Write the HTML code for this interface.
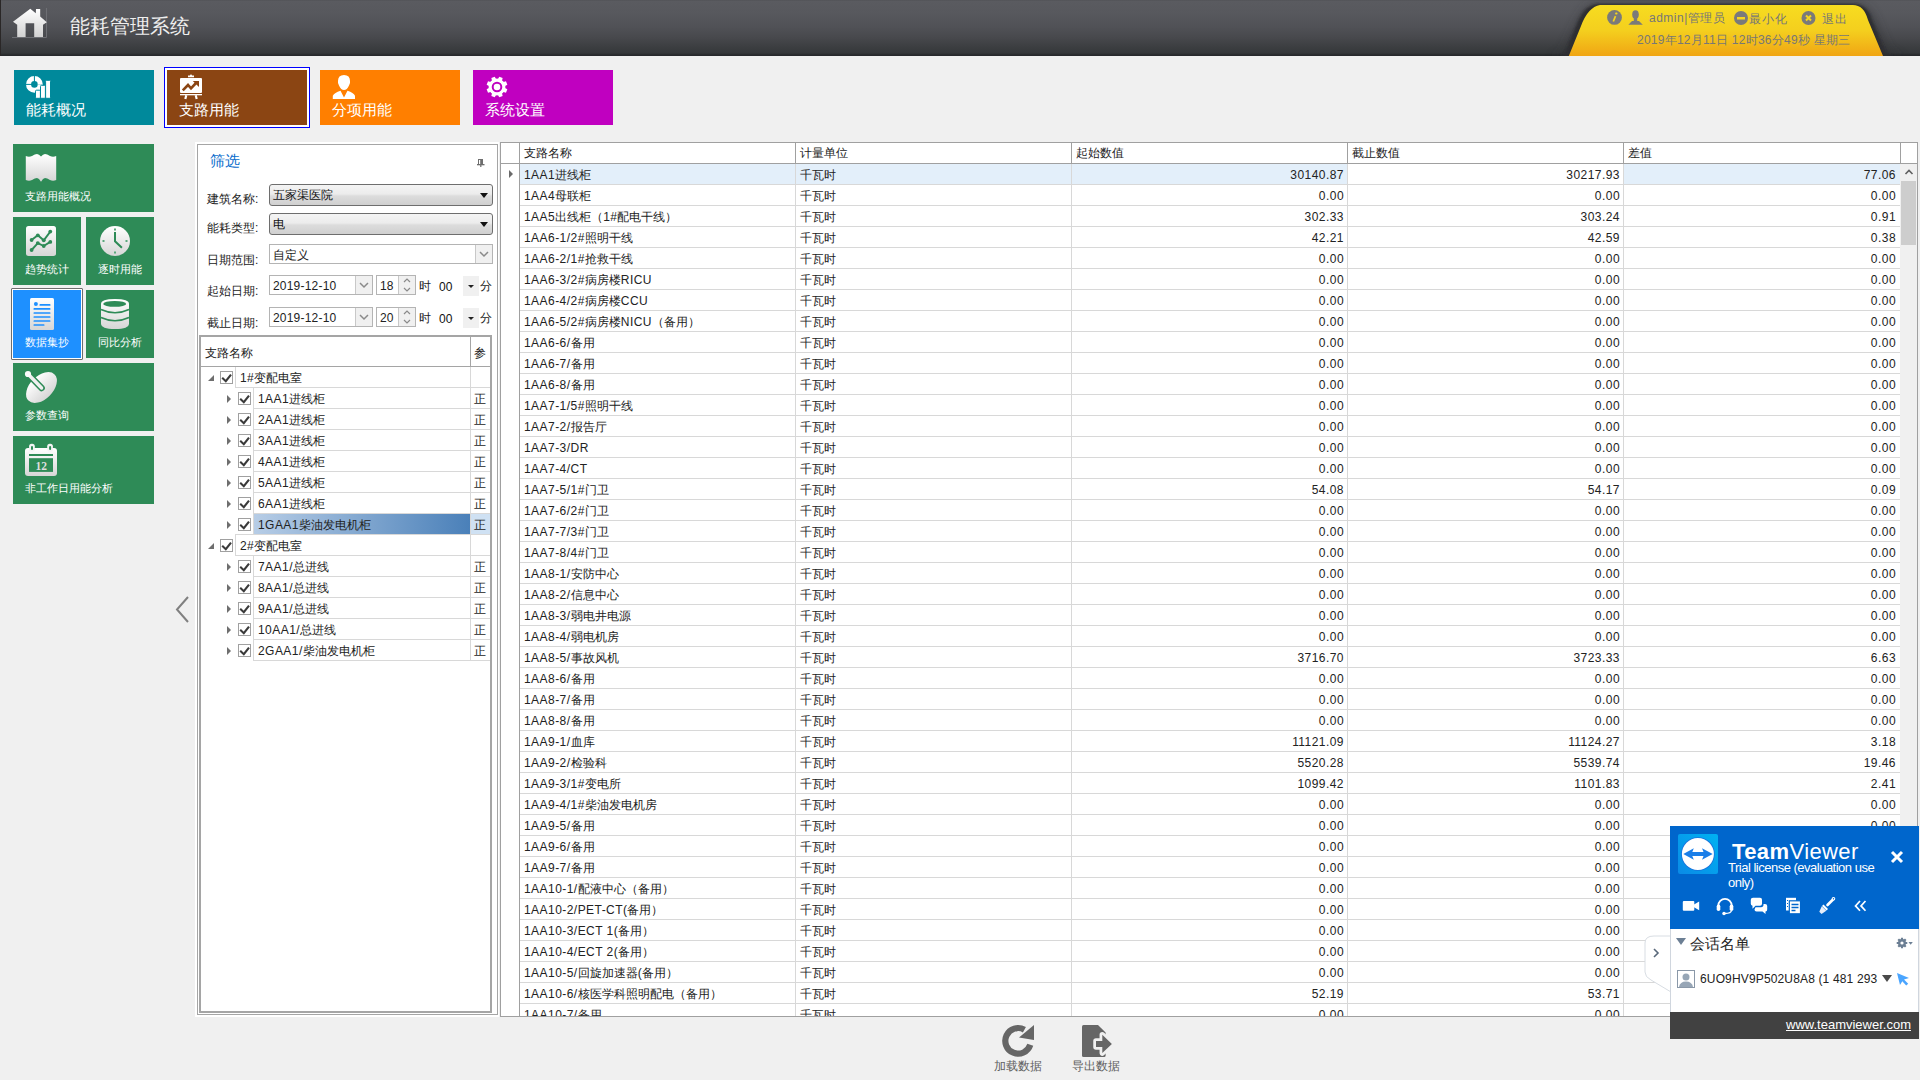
<!DOCTYPE html>
<html><head><meta charset="utf-8"><title>能耗管理系统</title>
<style>
*{box-sizing:border-box}
html,body{margin:0;padding:0}
body{width:1920px;height:1080px;position:relative;overflow:hidden;background:#f0f0f0;font-family:"Liberation Sans",sans-serif;font-size:12px;color:#222}
.abs{position:absolute}
/* header */
.hdr{position:absolute;left:0;top:0;width:1920px;height:56px;background:linear-gradient(#4f5054 0px,#5a5b60 1px,#57585d 14px,#515257 26px,#48494d 37px,#3d3f42 46px,#35383a 53px,#2b2d2f 54.5px,#25272a 56px)}
.title{position:absolute;left:70px;top:12px;font-size:20px;color:#eeeeee;line-height:26px;letter-spacing:0px}
/* top tiles */
.tile{position:absolute;top:70px;width:140px;height:55px;color:#fff}
.tile .lbl{position:absolute;left:12px;top:31px;font-size:15px;line-height:18px}
.tile svg{position:absolute}
/* side tiles */
.st{position:absolute;background:#2e8b57;color:#fff}
.st .lbl{position:absolute;left:12px;top:45px;font-size:11px;line-height:14px;white-space:nowrap}
.st svg{position:absolute}
/* filter */
.fp{position:absolute;left:195px;top:142px;width:304px;height:875px;background:#fff}
.fpb{position:absolute;left:197px;top:144px;width:301px;height:871px;border:1px solid #a5a5a5}
.flbl{position:absolute;left:207px;font-size:12px;line-height:14px;color:#222}
.combo{position:absolute;left:269px;width:224px;height:22px;border:1px solid #6e6e6e;border-radius:3px;background:linear-gradient(#f4f4f4 0%,#ececec 45%,#dcdcdc 55%,#d0d0d0 100%)}
.combo .v{position:absolute;left:3px;top:3px;font-size:12px;line-height:14px;color:#111}
.combo .dd{position:absolute;right:4px;top:8px;width:0;height:0;border-left:4px solid transparent;border-right:4px solid transparent;border-top:5px solid #111}
.tbox{position:absolute;background:#fff;border:1px solid #b4b4b4}
.tbox .v{position:absolute;left:3px;top:3px;font-size:12px;line-height:14px;color:#222;letter-spacing:0.2px}
.ddb{position:absolute;top:0;bottom:0;background:#f0f0f0;border-left:1px solid #c8c8c8}
/* grid */
.grid{position:absolute;left:0;top:0}
.gframe{position:absolute;left:500px;top:142px;width:1418px;height:875px;border:1px solid #a0a0a0;background:#fff}
.gh{position:absolute;top:146px;font-size:12px;line-height:14px;color:#222;white-space:nowrap}
.ghb{position:absolute;left:501px;top:163px;width:1416px;height:1px;background:#a0a0a0}
.hl{position:absolute;height:20px;background:#e3effa}
.rl{position:absolute;left:520px;width:1380px;height:1px;background:#d8d8d8}
.gt{position:absolute;margin-top:1px;font-size:12px;line-height:20px;color:#222;white-space:nowrap}
.gt.r{text-align:right;letter-spacing:0.45px}
.cl{position:absolute;top:164px;width:1px;height:852px;background:#d8d8d8}
.chl{position:absolute;top:143px;width:1px;height:21px;background:#a0a0a0}
.rarrow{position:absolute;left:509px;top:170px;width:0;height:0;border-top:4px solid transparent;border-bottom:4px solid transparent;border-left:4px solid #6a6a6a}
.sb{position:absolute;left:1900px;top:164px;width:17px;height:852px;background:#f0f0f0}
.sbthumb{position:absolute;left:1901px;top:181px;width:15px;height:64px;background:#cdcdcd}
.sbup{position:absolute;left:1901px;top:164px;width:16px;height:17px}
/* tree */
.treeb{position:absolute;left:199px;top:335px;width:293px;height:678px;border:2px solid #a5a5a5;background:#fff}
.th{position:absolute;top:346px;font-size:12px;line-height:14px;color:#222}
.thb{position:absolute;left:201px;top:366px;width:289px;height:1px;background:#a5a5a5}
.tcl{position:absolute;left:470px;top:337px;width:1px;height:29px;background:#a5a5a5}
.tvl2{position:absolute;left:470px;width:1px;height:21px;background:#d8d8d8}
.tri0{position:absolute;left:208px;width:0;height:0;border-left:6px solid transparent;border-bottom:6px solid #6e6e6e}
.tri1{position:absolute;left:227px;width:0;height:0;border-top:4px solid transparent;border-bottom:4px solid transparent;border-left:4px solid #6e6e6e}
.cb{position:absolute;width:13px;height:13px;border:1px solid #a0a0a0;background:#fff}
.cb svg{position:absolute;left:-1px;top:-1px}
.tvl{position:absolute;width:1px;height:21px;background:#d8d8d8}
.thl{position:absolute;height:1px;background:#d8d8d8}
.tt{position:absolute;margin-top:1px;font-size:12px;line-height:20px;color:#222;white-space:nowrap}
.tsel{position:absolute;left:254px;width:216px;height:20px;background:linear-gradient(90deg,#b7cde6,#4a80b9)}
.tsel2{position:absolute;left:471px;width:19px;height:20px;background:#cfe1f3}
/* bottom */
.bbtn{position:absolute;font-size:12px;line-height:14px;color:#606060}
/* teamviewer */
.tv{position:absolute;left:1670px;top:826px;width:249px;height:213px;background:#fff}
.tvh{position:absolute;left:0;top:0;width:249px;height:103px;background:#0066cc}
.tvf{position:absolute;left:0;top:186px;width:249px;height:27px;background:#414141}

.lt{letter-spacing:0.45px}

</style></head>
<body>
<!-- header -->
<div class="hdr"></div>
<div class="abs" style="left:0;top:0;width:1px;height:56px;background:#2a2727"></div>
<svg class="abs" style="left:0;top:0" width="60" height="56">
 <defs><linearGradient id="hg" x1="0" y1="0" x2="0" y2="1"><stop offset="0" stop-color="#ffffff"/><stop offset="1" stop-color="#d2d2d2"/></linearGradient></defs>
 <path d="M46.5 8 L46.5 37.5 L12 37.5" fill="none" stroke="#6e6f74" stroke-width="1"/>
 <path d="M30.3 8.7 L35.8 13.2 L36 9 L40.2 9 L40.2 16.5 L46.8 22.3 L43 24.8 L43 37 L34.2 37 L34.2 23.3 L25.6 23.3 L25.6 37 L17.2 37 L17.2 24.8 L13 21.8 Z" fill="url(#hg)"/>
</svg>
<div class="title" style="top:13px">能耗管理系统</div>

<!-- yellow tab -->
<svg class="abs" style="left:1540px;top:0" width="380" height="56">
 <defs>
  <linearGradient id="yg" x1="0" y1="0" x2="0" y2="1"><stop offset="0" stop-color="#f7dc20"/><stop offset="0.5" stop-color="#f4cf1e"/><stop offset="1" stop-color="#f0a514"/></linearGradient>
  <filter id="blur1" x="-20%" y="-20%" width="140%" height="140%"><feGaussianBlur stdDeviation="1.2"/></filter>
  <filter id="blur2" x="-20%" y="-20%" width="140%" height="140%"><feGaussianBlur stdDeviation="4"/></filter>
 </defs>
 <path d="M8 56 Q20 56 24 48 L36 22 Q44 3 60 3 L312 3 Q330 3 336 20 L348 48 Q353 56 368 56 Z" fill="#303135" opacity="0.5" filter="url(#blur2)"/>
 <path d="M18 56 Q24 56 26 50 L37 24 Q44 4 60 4 L313 4 Q328 4 332 20 L345 50 Q348 56 356 56 Z" fill="#2e2f33" filter="url(#blur1)"/>
 <path d="M28.8 56 L41 26 Q48 7 60 5 L312.8 5 Q324 5 328 20 L343 56 Z" fill="url(#yg)"/>
</svg>
<svg class="abs" style="left:1606px;top:9px" width="18" height="18"><circle cx="8.5" cy="8.4" r="7.4" fill="#7a7a7a"/><path d="M10 4.5 L10.6 4.5" stroke="#f5d520" stroke-width="1.8" stroke-linecap="round"/><path d="M9.5 7.2 L7.3 12.5" stroke="#f5d520" stroke-width="1.7"/></svg>
<svg class="abs" style="left:1626px;top:8px" width="18" height="18"><ellipse cx="9.5" cy="6.5" rx="3.3" ry="4.3" fill="#7a7a7a"/><rect x="7.8" y="9" width="3.4" height="4.5" fill="#7a7a7a"/><path d="M2.4 16.75 L6 13 L13 13 L16.8 16.75 Z" fill="#7a7a7a"/></svg>
<div class="abs" style="left:1649px;top:10px;font-size:12px;line-height:16px;color:#777;white-space:nowrap;letter-spacing:0.5px">admin|管理员</div>
<svg class="abs" style="left:1734px;top:11px" width="15" height="15"><circle cx="7" cy="7" r="7" fill="#7a7a7a"/><rect x="3" y="6" width="8" height="2.5" fill="#f5d520"/></svg>
<div class="abs" style="left:1749px;top:11px;font-size:12px;line-height:16px;color:#777;white-space:nowrap;letter-spacing:1px">最小化</div>
<svg class="abs" style="left:1801px;top:11px" width="15" height="15"><circle cx="7.5" cy="7" r="7" fill="#7a7a7a"/><path d="M5 4.5 L10 9.5 M10 4.5 L5 9.5" stroke="#f5d520" stroke-width="2"/></svg>
<div class="abs" style="left:1822px;top:11px;font-size:12px;line-height:16px;color:#777;white-space:nowrap;letter-spacing:1px">退出</div>
<div class="abs" style="left:1637px;top:32px;font-size:12px;line-height:16px;color:#777;white-space:nowrap;letter-spacing:0.25px">2019年12月11日 12时36分49秒 星期三</div>

<!-- top tiles -->
<div class="tile" style="left:14px;background:#00899b">
 <svg style="left:6px;top:0px" width="40" height="30"><path d="M14.4 6 A8.4 8.4 0 1 0 22.8 14.4 L17.7 14.4 A3.3 3.3 0 1 1 14.4 11.1 Z" fill="#fff"/><path d="M14.4 6 A8.4 8.4 0 0 1 22.8 14.4 L17.7 14.4 A3.3 3.3 0 0 0 14.4 11.1 Z" fill="#fff"/><rect x="13.9" y="5" width="1" height="7" fill="#00899b"/><rect x="5" y="13.9" width="7" height="1" fill="#00899b"/><g fill="#fff" stroke="#00899b" stroke-width="1"><rect x="15.5" y="20.2" width="4.9" height="8.1" rx="1"/><rect x="20.5" y="15.3" width="4.9" height="13" rx="1"/><rect x="25.6" y="10.3" width="4.9" height="18" rx="1"/></g></svg>
 <div class="lbl">能耗概况</div>
</div>
<div class="abs" style="left:164px;top:67px;width:146px;height:61px;border:1px solid #0000ff;background:#fff"></div>
<div class="tile" style="left:167px;background:#8b4513">
 <svg style="left:8px;top:0px" width="34" height="32"><path d="M13 7.2 L13 5.6 L15 5.6 L15.5 4.6 L16.5 4.6 L17 5.6 L19 5.6 L19 7.2 Z" fill="#fff"/><rect x="5" y="7.9" width="22" height="15.1" rx="1" fill="#fff"/><rect x="5" y="24" width="22" height="1.3" fill="#fff"/><path d="M11.3 25.2 L10.3 29 M20.7 25.2 L21.7 29" stroke="#fff" stroke-width="2.2"/><path d="M7.8 20.3 L13 15 L16 18.3 L21.5 12.5" stroke="#8b4513" stroke-width="2.6" fill="none"/><path d="M17.8 11 L24 11 L24 17 Z" fill="#8b4513"/></svg>
 <div class="lbl">支路用能</div>
</div>
<div class="tile" style="left:320px;background:#ff7f00">
 <svg style="left:6px;top:0px" width="36" height="32"><path d="M18 4.9 Q24 4.9 24 11 Q24.5 13.5 23 15.5 Q21 20 18 20 Q15 20 13 15.5 Q11.5 13.5 12 11 Q12 4.9 18 4.9 Z" fill="#fff"/><path d="M6.8 28.9 L6.8 25.8 Q8.5 22.5 14.5 20.7 L18 27.5 L21.5 20.7 Q27.5 22.5 29 25.8 L29 28.9 Z" fill="#fff"/></svg>
 <div class="lbl">分项用能</div>
</div>
<div class="tile" style="left:473px;background:#c000c0">
 <svg style="left:7px;top:0px" width="34" height="34"><path d="M18.00 8.86 L19.34 6.66 L22.65 8.03 L22.05 10.54 L23.46 11.95 L25.97 11.35 L27.34 14.66 L25.14 16.00 L25.14 18.00 L27.34 19.34 L25.97 22.65 L23.46 22.05 L22.05 23.46 L22.65 25.97 L19.34 27.34 L18.00 25.14 L16.00 25.14 L14.66 27.34 L11.35 25.97 L11.95 23.46 L10.54 22.05 L8.03 22.65 L6.66 19.34 L8.86 18.00 L8.86 16.00 L6.66 14.66 L8.03 11.35 L10.54 11.95 L11.95 10.54 L11.35 8.03 L14.66 6.66 L16.00 8.86 Z" fill="#fff"/><circle cx="17" cy="17" r="8.3" fill="#fff"/><circle cx="17" cy="17" r="4.3" fill="none" stroke="#c000c0" stroke-width="2"/></svg>
 <div class="lbl">系统设置</div>
</div>

<!-- side tiles -->
<svg width="0" height="0" style="position:absolute"><defs><linearGradient id="wg" x1="0" y1="0" x2="0" y2="1"><stop offset="0" stop-color="#ffffff"/><stop offset="1" stop-color="#d6d6d6"/></linearGradient></defs></svg>
<div class="st" style="left:13px;top:144px;width:141px;height:68px">
 <svg style="left:7px;top:4px" width="42" height="36"><path d="M5.8 8 Q9 9.5 12 8 Q15 6 17 6 Q19 6 21 8.5 Q23 6 25 6 Q27 6 30 8 Q33 9.5 36.2 8 L36.2 32 Q33 33.5 30 32 Q27 30 25 30 Q23 30 21 33.7 Q19 30 17 30 Q15 30 12 32 Q9 33.5 5.8 32 Z" fill="url(#wg)"/></svg>
 <div class="lbl">支路用能概况</div>
</div>
<div class="st" style="left:13px;top:217px;width:68px;height:68px">
 <svg style="left:13px;top:9px" width="32" height="32"><rect x="0" y="0" width="30" height="30" rx="2.5" fill="url(#wg)"/><path d="M5.6 14 L11.8 9.3 L17.75 14.3 L24.3 5.6 M5.6 24 L11.8 17.1 L17.75 20 L24.3 15.9" stroke="#2e8b57" stroke-width="1.9" fill="none"/><g fill="#2e8b57"><circle cx="5.6" cy="14" r="1.9"/><circle cx="11.8" cy="9.3" r="1.9"/><circle cx="17.75" cy="14.3" r="1.9"/><circle cx="24.3" cy="5.6" r="1.9"/><circle cx="5.6" cy="24" r="1.9"/><circle cx="11.8" cy="17.1" r="1.9"/><circle cx="17.75" cy="20" r="1.9"/><circle cx="24.3" cy="15.9" r="1.9"/></g></svg>
 <div class="lbl">趋势统计</div>
</div>
<div class="st" style="left:86px;top:217px;width:68px;height:68px">
 <svg style="left:14px;top:9px" width="32" height="32"><circle cx="15" cy="15" r="15" fill="url(#wg)"/><path d="M15 6 L15 15.2 L21.9 21.8" stroke="#2e8b57" stroke-width="2" fill="none"/><g fill="#5aa87c"><rect x="14" y="2.5" width="2" height="2"/><rect x="14" y="25.5" width="2" height="2"/><rect x="2.5" y="14" width="2" height="2"/><rect x="25.5" y="14" width="2" height="2"/></g></svg>
 <div class="lbl" style="left:12px">逐时用能</div>
</div>
<div class="abs" style="left:11px;top:288px;width:72px;height:72px;border:1px solid #6e6e6e;background:#fff;border-radius:1px"></div>
<div class="st" style="left:13px;top:290px;width:68px;height:68px;background:#1e90ff">
 <svg style="left:17px;top:8px" width="26" height="34"><rect x="0" y="0" width="24" height="32" rx="1.5" fill="url(#wg)"/><circle cx="5.9" cy="5.9" r="2" fill="#1e90ff"/><g stroke="#1e90ff" stroke-width="1.7" stroke-linecap="round"><path d="M10.3 6.9 L19.7 6.9 M4.3 10.9 L19.7 10.9 M4.3 15 L19.7 15 M4.3 19 L19.7 19 M4.3 23 L19.7 23 M4.3 27 L13.7 27"/></g></svg>
 <div class="lbl">数据集抄</div>
</div>
<div class="st" style="left:86px;top:290px;width:68px;height:68px">
 <svg style="left:14px;top:8px" width="32" height="34"><path d="M1 6 Q1 1 15 1 Q29 1 29 6 L29 25.5 Q29 31 15 31 Q1 31 1 25.5 Z" fill="url(#wg)"/><ellipse cx="14.7" cy="5.9" rx="11.5" ry="2.9" fill="#2e8b57"/><path d="M1 11.5 Q15 18 29 11.5 M1 19.5 Q15 26 29 19.5" stroke="#2e8b57" stroke-width="1.7" fill="none"/></svg>
 <div class="lbl" style="left:12px">同比分析</div>
</div>
<div class="st" style="left:13px;top:363px;width:141px;height:68px">
 <svg style="left:7px;top:2px" width="44" height="44"><ellipse cx="21.5" cy="22.5" rx="18.5" ry="11.5" transform="rotate(-45 21.5 22.5)" fill="url(#wg)"/><path d="M8 9 L21.6 23" stroke="#2e8b57" stroke-width="6.5" stroke-linecap="round"/><path d="M8 9 L21.6 23" stroke="#f0f0f0" stroke-width="3.4" stroke-linecap="round"/><circle cx="8" cy="9" r="3.1" fill="#fafafa"/></svg>
 <div class="lbl">参数查询</div>
</div>
<div class="st" style="left:13px;top:436px;width:141px;height:68px">
 <svg style="left:7px;top:2px" width="44" height="44"><rect x="5" y="10" width="32" height="28" rx="3" fill="url(#wg)"/><rect x="9" y="16" width="24" height="2" fill="#2e8b57"/><rect x="9" y="20.2" width="24" height="13.7" fill="#2e8b57"/><rect x="9.1" y="5.8" width="5.7" height="8" rx="2.5" fill="#f4f4f4"/><rect x="11" y="8" width="2" height="4" rx="1" fill="#2e8b57"/><rect x="27.2" y="5.8" width="5.7" height="8" rx="2.5" fill="#f4f4f4"/><rect x="29.1" y="8" width="2" height="4" rx="1" fill="#2e8b57"/><text x="21.2" y="32.2" text-anchor="middle" font-family="Liberation Serif" font-weight="bold" font-size="11.5" fill="#dedede">12</text></svg>
 <div class="lbl">非工作日用能分析</div>
</div>

<!-- collapse arrow -->
<svg class="abs" style="left:170px;top:592px" width="24" height="36"><path d="M188 597 L177 609.5 L188 622" transform="translate(-170,-592)" stroke="#808080" stroke-width="2" fill="none"/></svg>

<!-- filter panel -->
<div class="fp"></div>
<div class="fpb"></div>
<div class="abs" style="left:210px;top:152px;font-size:15px;line-height:18px;color:#0a6ccc">筛选</div>
<svg class="abs" style="left:476px;top:158px" width="10" height="10"><rect x="2" y="1" width="5" height="5.5" fill="#6e6e6e"/><rect x="3" y="2" width="1.2" height="4" fill="#fff"/><rect x="1" y="6" width="7.5" height="1.3" fill="#6e6e6e"/><rect x="4.2" y="7" width="1.2" height="2" fill="#6e6e6e"/></svg>
<div class="flbl" style="top:192px">建筑名称:</div>
<div class="flbl" style="top:221px">能耗类型:</div>
<div class="flbl" style="top:253px">日期范围:</div>
<div class="flbl" style="top:284px">起始日期:</div>
<div class="flbl" style="top:316px">截止日期:</div>
<div class="combo" style="top:184px"><div class="v">五家渠医院</div><div class="dd"></div></div>
<div class="combo" style="top:213px"><div class="v">电</div><div class="dd"></div></div>
<div class="tbox" style="left:269px;top:244px;width:224px;height:20px"><div class="v">自定义</div><div class="ddb" style="right:0;width:17px"><svg width="16" height="18"><path d="M4 7 L8 11 L12 7" stroke="#8a8a8a" stroke-width="1.5" fill="none"/></svg></div></div>
<div class="tbox" style="left:269px;top:275px;width:104px;height:20px"><div class="v">2019-12-10</div><div class="ddb" style="right:0;width:17px"><svg width="16" height="18"><path d="M4 7 L8 11 L12 7" stroke="#8a8a8a" stroke-width="1.5" fill="none"/></svg></div></div>
<div class="tbox" style="left:376px;top:275px;width:40px;height:20px"><div class="v">18</div><div class="ddb" style="right:0;width:17px"><svg width="16" height="18"><path d="M5 6 L8 3 L11 6 M5 12 L8 15 L11 12" stroke="#8a8a8a" stroke-width="1.2" fill="none"/></svg></div></div>
<div class="abs" style="left:419px;top:278px;font-size:12px;line-height:16px">时</div>
<div class="abs" style="left:439px;top:279px;font-size:12px;line-height:16px;color:#111">00</div>
<div class="abs" style="left:463px;top:276px;width:16px;height:20px;background:#f0f0f0"><div style="position:absolute;left:5px;top:9px;border-left:3px solid transparent;border-right:3px solid transparent;border-top:3px solid #222"></div></div>
<div class="abs" style="left:480px;top:278px;font-size:12px;line-height:16px">分</div>
<div class="tbox" style="left:269px;top:307px;width:104px;height:20px"><div class="v">2019-12-10</div><div class="ddb" style="right:0;width:17px"><svg width="16" height="18"><path d="M4 7 L8 11 L12 7" stroke="#8a8a8a" stroke-width="1.5" fill="none"/></svg></div></div>
<div class="tbox" style="left:376px;top:307px;width:40px;height:20px"><div class="v">20</div><div class="ddb" style="right:0;width:17px"><svg width="16" height="18"><path d="M5 6 L8 3 L11 6 M5 12 L8 15 L11 12" stroke="#8a8a8a" stroke-width="1.2" fill="none"/></svg></div></div>
<div class="abs" style="left:419px;top:310px;font-size:12px;line-height:16px">时</div>
<div class="abs" style="left:439px;top:311px;font-size:12px;line-height:16px;color:#111">00</div>
<div class="abs" style="left:463px;top:308px;width:16px;height:20px;background:#f0f0f0"><div style="position:absolute;left:5px;top:9px;border-left:3px solid transparent;border-right:3px solid transparent;border-top:3px solid #222"></div></div>
<div class="abs" style="left:480px;top:310px;font-size:12px;line-height:16px">分</div>
<div class="treeb"></div>
<div class="gframe"></div>

<div class="grid" style="width:1920px;height:1016px;overflow:hidden">
<div class="gh" style="left:524px">支路名称</div>
<div class="gh" style="left:800px">计量单位</div>
<div class="gh" style="left:1076px">起始数值</div>
<div class="gh" style="left:1352px">截止数值</div>
<div class="gh" style="left:1628px">差值</div>
<div class="hl" style="top:164px;left:520px;width:827px"></div>
<div class="hl" style="top:164px;left:1624px;width:276px"></div>
<div class="rarrow"></div>
<div class="rl" style="top:184px"></div>
<div class="gt" style="top:164px;left:524px"><span class="lt">1AA1</span>进线柜</div>
<div class="gt" style="top:164px;left:800px">千瓦时</div>
<div class="gt r" style="top:164px;left:1072px;width:272px">30140.87</div>
<div class="gt r" style="top:164px;left:1348px;width:272px">30217.93</div>
<div class="gt r" style="top:164px;left:1624px;width:272px">77.06</div>
<div class="rl" style="top:205px"></div>
<div class="gt" style="top:185px;left:524px"><span class="lt">1AA4</span>母联柜</div>
<div class="gt" style="top:185px;left:800px">千瓦时</div>
<div class="gt r" style="top:185px;left:1072px;width:272px">0.00</div>
<div class="gt r" style="top:185px;left:1348px;width:272px">0.00</div>
<div class="gt r" style="top:185px;left:1624px;width:272px">0.00</div>
<div class="rl" style="top:226px"></div>
<div class="gt" style="top:206px;left:524px"><span class="lt">1AA5</span>出线柜（<span class="lt">1#</span>配电干线）</div>
<div class="gt" style="top:206px;left:800px">千瓦时</div>
<div class="gt r" style="top:206px;left:1072px;width:272px">302.33</div>
<div class="gt r" style="top:206px;left:1348px;width:272px">303.24</div>
<div class="gt r" style="top:206px;left:1624px;width:272px">0.91</div>
<div class="rl" style="top:247px"></div>
<div class="gt" style="top:227px;left:524px"><span class="lt">1AA6-1/2#</span>照明干线</div>
<div class="gt" style="top:227px;left:800px">千瓦时</div>
<div class="gt r" style="top:227px;left:1072px;width:272px">42.21</div>
<div class="gt r" style="top:227px;left:1348px;width:272px">42.59</div>
<div class="gt r" style="top:227px;left:1624px;width:272px">0.38</div>
<div class="rl" style="top:268px"></div>
<div class="gt" style="top:248px;left:524px"><span class="lt">1AA6-2/1#</span>抢救干线</div>
<div class="gt" style="top:248px;left:800px">千瓦时</div>
<div class="gt r" style="top:248px;left:1072px;width:272px">0.00</div>
<div class="gt r" style="top:248px;left:1348px;width:272px">0.00</div>
<div class="gt r" style="top:248px;left:1624px;width:272px">0.00</div>
<div class="rl" style="top:289px"></div>
<div class="gt" style="top:269px;left:524px"><span class="lt">1AA6-3/2#</span>病房楼<span class="lt">RICU</span></div>
<div class="gt" style="top:269px;left:800px">千瓦时</div>
<div class="gt r" style="top:269px;left:1072px;width:272px">0.00</div>
<div class="gt r" style="top:269px;left:1348px;width:272px">0.00</div>
<div class="gt r" style="top:269px;left:1624px;width:272px">0.00</div>
<div class="rl" style="top:310px"></div>
<div class="gt" style="top:290px;left:524px"><span class="lt">1AA6-4/2#</span>病房楼<span class="lt">CCU</span></div>
<div class="gt" style="top:290px;left:800px">千瓦时</div>
<div class="gt r" style="top:290px;left:1072px;width:272px">0.00</div>
<div class="gt r" style="top:290px;left:1348px;width:272px">0.00</div>
<div class="gt r" style="top:290px;left:1624px;width:272px">0.00</div>
<div class="rl" style="top:331px"></div>
<div class="gt" style="top:311px;left:524px"><span class="lt">1AA6-5/2#</span>病房楼<span class="lt">NICU</span>（备用）</div>
<div class="gt" style="top:311px;left:800px">千瓦时</div>
<div class="gt r" style="top:311px;left:1072px;width:272px">0.00</div>
<div class="gt r" style="top:311px;left:1348px;width:272px">0.00</div>
<div class="gt r" style="top:311px;left:1624px;width:272px">0.00</div>
<div class="rl" style="top:352px"></div>
<div class="gt" style="top:332px;left:524px"><span class="lt">1AA6-6/</span>备用</div>
<div class="gt" style="top:332px;left:800px">千瓦时</div>
<div class="gt r" style="top:332px;left:1072px;width:272px">0.00</div>
<div class="gt r" style="top:332px;left:1348px;width:272px">0.00</div>
<div class="gt r" style="top:332px;left:1624px;width:272px">0.00</div>
<div class="rl" style="top:373px"></div>
<div class="gt" style="top:353px;left:524px"><span class="lt">1AA6-7/</span>备用</div>
<div class="gt" style="top:353px;left:800px">千瓦时</div>
<div class="gt r" style="top:353px;left:1072px;width:272px">0.00</div>
<div class="gt r" style="top:353px;left:1348px;width:272px">0.00</div>
<div class="gt r" style="top:353px;left:1624px;width:272px">0.00</div>
<div class="rl" style="top:394px"></div>
<div class="gt" style="top:374px;left:524px"><span class="lt">1AA6-8/</span>备用</div>
<div class="gt" style="top:374px;left:800px">千瓦时</div>
<div class="gt r" style="top:374px;left:1072px;width:272px">0.00</div>
<div class="gt r" style="top:374px;left:1348px;width:272px">0.00</div>
<div class="gt r" style="top:374px;left:1624px;width:272px">0.00</div>
<div class="rl" style="top:415px"></div>
<div class="gt" style="top:395px;left:524px"><span class="lt">1AA7-1/5#</span>照明干线</div>
<div class="gt" style="top:395px;left:800px">千瓦时</div>
<div class="gt r" style="top:395px;left:1072px;width:272px">0.00</div>
<div class="gt r" style="top:395px;left:1348px;width:272px">0.00</div>
<div class="gt r" style="top:395px;left:1624px;width:272px">0.00</div>
<div class="rl" style="top:436px"></div>
<div class="gt" style="top:416px;left:524px"><span class="lt">1AA7-2/</span>报告厅</div>
<div class="gt" style="top:416px;left:800px">千瓦时</div>
<div class="gt r" style="top:416px;left:1072px;width:272px">0.00</div>
<div class="gt r" style="top:416px;left:1348px;width:272px">0.00</div>
<div class="gt r" style="top:416px;left:1624px;width:272px">0.00</div>
<div class="rl" style="top:457px"></div>
<div class="gt" style="top:437px;left:524px"><span class="lt">1AA7-3/DR</span></div>
<div class="gt" style="top:437px;left:800px">千瓦时</div>
<div class="gt r" style="top:437px;left:1072px;width:272px">0.00</div>
<div class="gt r" style="top:437px;left:1348px;width:272px">0.00</div>
<div class="gt r" style="top:437px;left:1624px;width:272px">0.00</div>
<div class="rl" style="top:478px"></div>
<div class="gt" style="top:458px;left:524px"><span class="lt">1AA7-4/CT</span></div>
<div class="gt" style="top:458px;left:800px">千瓦时</div>
<div class="gt r" style="top:458px;left:1072px;width:272px">0.00</div>
<div class="gt r" style="top:458px;left:1348px;width:272px">0.00</div>
<div class="gt r" style="top:458px;left:1624px;width:272px">0.00</div>
<div class="rl" style="top:499px"></div>
<div class="gt" style="top:479px;left:524px"><span class="lt">1AA7-5/1#</span>门卫</div>
<div class="gt" style="top:479px;left:800px">千瓦时</div>
<div class="gt r" style="top:479px;left:1072px;width:272px">54.08</div>
<div class="gt r" style="top:479px;left:1348px;width:272px">54.17</div>
<div class="gt r" style="top:479px;left:1624px;width:272px">0.09</div>
<div class="rl" style="top:520px"></div>
<div class="gt" style="top:500px;left:524px"><span class="lt">1AA7-6/2#</span>门卫</div>
<div class="gt" style="top:500px;left:800px">千瓦时</div>
<div class="gt r" style="top:500px;left:1072px;width:272px">0.00</div>
<div class="gt r" style="top:500px;left:1348px;width:272px">0.00</div>
<div class="gt r" style="top:500px;left:1624px;width:272px">0.00</div>
<div class="rl" style="top:541px"></div>
<div class="gt" style="top:521px;left:524px"><span class="lt">1AA7-7/3#</span>门卫</div>
<div class="gt" style="top:521px;left:800px">千瓦时</div>
<div class="gt r" style="top:521px;left:1072px;width:272px">0.00</div>
<div class="gt r" style="top:521px;left:1348px;width:272px">0.00</div>
<div class="gt r" style="top:521px;left:1624px;width:272px">0.00</div>
<div class="rl" style="top:562px"></div>
<div class="gt" style="top:542px;left:524px"><span class="lt">1AA7-8/4#</span>门卫</div>
<div class="gt" style="top:542px;left:800px">千瓦时</div>
<div class="gt r" style="top:542px;left:1072px;width:272px">0.00</div>
<div class="gt r" style="top:542px;left:1348px;width:272px">0.00</div>
<div class="gt r" style="top:542px;left:1624px;width:272px">0.00</div>
<div class="rl" style="top:583px"></div>
<div class="gt" style="top:563px;left:524px"><span class="lt">1AA8-1/</span>安防中心</div>
<div class="gt" style="top:563px;left:800px">千瓦时</div>
<div class="gt r" style="top:563px;left:1072px;width:272px">0.00</div>
<div class="gt r" style="top:563px;left:1348px;width:272px">0.00</div>
<div class="gt r" style="top:563px;left:1624px;width:272px">0.00</div>
<div class="rl" style="top:604px"></div>
<div class="gt" style="top:584px;left:524px"><span class="lt">1AA8-2/</span>信息中心</div>
<div class="gt" style="top:584px;left:800px">千瓦时</div>
<div class="gt r" style="top:584px;left:1072px;width:272px">0.00</div>
<div class="gt r" style="top:584px;left:1348px;width:272px">0.00</div>
<div class="gt r" style="top:584px;left:1624px;width:272px">0.00</div>
<div class="rl" style="top:625px"></div>
<div class="gt" style="top:605px;left:524px"><span class="lt">1AA8-3/</span>弱电井电源</div>
<div class="gt" style="top:605px;left:800px">千瓦时</div>
<div class="gt r" style="top:605px;left:1072px;width:272px">0.00</div>
<div class="gt r" style="top:605px;left:1348px;width:272px">0.00</div>
<div class="gt r" style="top:605px;left:1624px;width:272px">0.00</div>
<div class="rl" style="top:646px"></div>
<div class="gt" style="top:626px;left:524px"><span class="lt">1AA8-4/</span>弱电机房</div>
<div class="gt" style="top:626px;left:800px">千瓦时</div>
<div class="gt r" style="top:626px;left:1072px;width:272px">0.00</div>
<div class="gt r" style="top:626px;left:1348px;width:272px">0.00</div>
<div class="gt r" style="top:626px;left:1624px;width:272px">0.00</div>
<div class="rl" style="top:667px"></div>
<div class="gt" style="top:647px;left:524px"><span class="lt">1AA8-5/</span>事故风机</div>
<div class="gt" style="top:647px;left:800px">千瓦时</div>
<div class="gt r" style="top:647px;left:1072px;width:272px">3716.70</div>
<div class="gt r" style="top:647px;left:1348px;width:272px">3723.33</div>
<div class="gt r" style="top:647px;left:1624px;width:272px">6.63</div>
<div class="rl" style="top:688px"></div>
<div class="gt" style="top:668px;left:524px"><span class="lt">1AA8-6/</span>备用</div>
<div class="gt" style="top:668px;left:800px">千瓦时</div>
<div class="gt r" style="top:668px;left:1072px;width:272px">0.00</div>
<div class="gt r" style="top:668px;left:1348px;width:272px">0.00</div>
<div class="gt r" style="top:668px;left:1624px;width:272px">0.00</div>
<div class="rl" style="top:709px"></div>
<div class="gt" style="top:689px;left:524px"><span class="lt">1AA8-7/</span>备用</div>
<div class="gt" style="top:689px;left:800px">千瓦时</div>
<div class="gt r" style="top:689px;left:1072px;width:272px">0.00</div>
<div class="gt r" style="top:689px;left:1348px;width:272px">0.00</div>
<div class="gt r" style="top:689px;left:1624px;width:272px">0.00</div>
<div class="rl" style="top:730px"></div>
<div class="gt" style="top:710px;left:524px"><span class="lt">1AA8-8/</span>备用</div>
<div class="gt" style="top:710px;left:800px">千瓦时</div>
<div class="gt r" style="top:710px;left:1072px;width:272px">0.00</div>
<div class="gt r" style="top:710px;left:1348px;width:272px">0.00</div>
<div class="gt r" style="top:710px;left:1624px;width:272px">0.00</div>
<div class="rl" style="top:751px"></div>
<div class="gt" style="top:731px;left:524px"><span class="lt">1AA9-1/</span>血库</div>
<div class="gt" style="top:731px;left:800px">千瓦时</div>
<div class="gt r" style="top:731px;left:1072px;width:272px">11121.09</div>
<div class="gt r" style="top:731px;left:1348px;width:272px">11124.27</div>
<div class="gt r" style="top:731px;left:1624px;width:272px">3.18</div>
<div class="rl" style="top:772px"></div>
<div class="gt" style="top:752px;left:524px"><span class="lt">1AA9-2/</span>检验科</div>
<div class="gt" style="top:752px;left:800px">千瓦时</div>
<div class="gt r" style="top:752px;left:1072px;width:272px">5520.28</div>
<div class="gt r" style="top:752px;left:1348px;width:272px">5539.74</div>
<div class="gt r" style="top:752px;left:1624px;width:272px">19.46</div>
<div class="rl" style="top:793px"></div>
<div class="gt" style="top:773px;left:524px"><span class="lt">1AA9-3/1#</span>变电所</div>
<div class="gt" style="top:773px;left:800px">千瓦时</div>
<div class="gt r" style="top:773px;left:1072px;width:272px">1099.42</div>
<div class="gt r" style="top:773px;left:1348px;width:272px">1101.83</div>
<div class="gt r" style="top:773px;left:1624px;width:272px">2.41</div>
<div class="rl" style="top:814px"></div>
<div class="gt" style="top:794px;left:524px"><span class="lt">1AA9-4/1#</span>柴油发电机房</div>
<div class="gt" style="top:794px;left:800px">千瓦时</div>
<div class="gt r" style="top:794px;left:1072px;width:272px">0.00</div>
<div class="gt r" style="top:794px;left:1348px;width:272px">0.00</div>
<div class="gt r" style="top:794px;left:1624px;width:272px">0.00</div>
<div class="rl" style="top:835px"></div>
<div class="gt" style="top:815px;left:524px"><span class="lt">1AA9-5/</span>备用</div>
<div class="gt" style="top:815px;left:800px">千瓦时</div>
<div class="gt r" style="top:815px;left:1072px;width:272px">0.00</div>
<div class="gt r" style="top:815px;left:1348px;width:272px">0.00</div>
<div class="gt r" style="top:815px;left:1624px;width:272px">0.00</div>
<div class="rl" style="top:856px"></div>
<div class="gt" style="top:836px;left:524px"><span class="lt">1AA9-6/</span>备用</div>
<div class="gt" style="top:836px;left:800px">千瓦时</div>
<div class="gt r" style="top:836px;left:1072px;width:272px">0.00</div>
<div class="gt r" style="top:836px;left:1348px;width:272px">0.00</div>
<div class="gt r" style="top:836px;left:1624px;width:272px">0.00</div>
<div class="rl" style="top:877px"></div>
<div class="gt" style="top:857px;left:524px"><span class="lt">1AA9-7/</span>备用</div>
<div class="gt" style="top:857px;left:800px">千瓦时</div>
<div class="gt r" style="top:857px;left:1072px;width:272px">0.00</div>
<div class="gt r" style="top:857px;left:1348px;width:272px">0.00</div>
<div class="gt r" style="top:857px;left:1624px;width:272px">0.00</div>
<div class="rl" style="top:898px"></div>
<div class="gt" style="top:878px;left:524px"><span class="lt">1AA10-1/</span>配液中心（备用）</div>
<div class="gt" style="top:878px;left:800px">千瓦时</div>
<div class="gt r" style="top:878px;left:1072px;width:272px">0.00</div>
<div class="gt r" style="top:878px;left:1348px;width:272px">0.00</div>
<div class="gt r" style="top:878px;left:1624px;width:272px">0.00</div>
<div class="rl" style="top:919px"></div>
<div class="gt" style="top:899px;left:524px"><span class="lt">1AA10-2/PET-CT(</span>备用）</div>
<div class="gt" style="top:899px;left:800px">千瓦时</div>
<div class="gt r" style="top:899px;left:1072px;width:272px">0.00</div>
<div class="gt r" style="top:899px;left:1348px;width:272px">0.00</div>
<div class="gt r" style="top:899px;left:1624px;width:272px">0.00</div>
<div class="rl" style="top:940px"></div>
<div class="gt" style="top:920px;left:524px"><span class="lt">1AA10-3/ECT 1(</span>备用）</div>
<div class="gt" style="top:920px;left:800px">千瓦时</div>
<div class="gt r" style="top:920px;left:1072px;width:272px">0.00</div>
<div class="gt r" style="top:920px;left:1348px;width:272px">0.00</div>
<div class="gt r" style="top:920px;left:1624px;width:272px">0.00</div>
<div class="rl" style="top:961px"></div>
<div class="gt" style="top:941px;left:524px"><span class="lt">1AA10-4/ECT 2(</span>备用）</div>
<div class="gt" style="top:941px;left:800px">千瓦时</div>
<div class="gt r" style="top:941px;left:1072px;width:272px">0.00</div>
<div class="gt r" style="top:941px;left:1348px;width:272px">0.00</div>
<div class="gt r" style="top:941px;left:1624px;width:272px">0.00</div>
<div class="rl" style="top:982px"></div>
<div class="gt" style="top:962px;left:524px"><span class="lt">1AA10-5/</span>回旋加速器<span class="lt">(</span>备用）</div>
<div class="gt" style="top:962px;left:800px">千瓦时</div>
<div class="gt r" style="top:962px;left:1072px;width:272px">0.00</div>
<div class="gt r" style="top:962px;left:1348px;width:272px">0.00</div>
<div class="gt r" style="top:962px;left:1624px;width:272px">0.00</div>
<div class="rl" style="top:1003px"></div>
<div class="gt" style="top:983px;left:524px"><span class="lt">1AA10-6/</span>核医学科照明配电（备用）</div>
<div class="gt" style="top:983px;left:800px">千瓦时</div>
<div class="gt r" style="top:983px;left:1072px;width:272px">52.19</div>
<div class="gt r" style="top:983px;left:1348px;width:272px">53.71</div>
<div class="gt r" style="top:983px;left:1624px;width:272px">1.52</div>
<div class="rl" style="top:1024px"></div>
<div class="gt" style="top:1004px;left:524px"><span class="lt">1AA10-7/</span>备用</div>
<div class="gt" style="top:1004px;left:800px">千瓦时</div>
<div class="gt r" style="top:1004px;left:1072px;width:272px">0.00</div>
<div class="gt r" style="top:1004px;left:1348px;width:272px">0.00</div>
<div class="gt r" style="top:1004px;left:1624px;width:272px">0.00</div>
<div class="cl" style="left:519px;background:#a0a0a0"></div>
<div class="chl" style="left:519px"></div>
<div class="cl" style="left:795px"></div>
<div class="chl" style="left:795px"></div>
<div class="cl" style="left:1071px"></div>
<div class="chl" style="left:1071px"></div>
<div class="cl" style="left:1347px"></div>
<div class="chl" style="left:1347px"></div>
<div class="cl" style="left:1623px"></div>
<div class="chl" style="left:1623px"></div>
<div class="chl" style="left:1900px"></div>
<div class="ghb"></div>
<div class="sb"></div><div class="sbthumb"></div><div class="sbup"><svg width="16" height="17"><path d="M4.5 10 L8 6.5 L11.5 10" stroke="#606060" stroke-width="1.6" fill="none"/></svg></div>
</div>
<div class="tree">
<div class="th" style="left:205px">支路名称</div><div class="th" style="left:474px">参</div>
<div class="thb"></div><div class="tcl"></div>
<div class="tri0" style="top:375px"></div>
<div class="cb" style="left:220px;top:371px"><svg width="13" height="13"><path d="M2.2 6.8 L5.8 10.2 L11 3.6" stroke="#3a3a3a" stroke-width="2.1" fill="none"/></svg></div>
<div class="tvl" style="left:235px;top:367px"></div>
<div class="thl" style="left:235px;top:387px;width:255px"></div>
<div class="tt" style="left:240px;top:367px"><span class="lt">1#</span>变配电室</div>
<div class="tvl2" style="top:367px"></div>
<div class="tri1" style="top:395px"></div>
<div class="cb" style="left:238px;top:392px"><svg width="13" height="13"><path d="M2.2 6.8 L5.8 10.2 L11 3.6" stroke="#3a3a3a" stroke-width="2.1" fill="none"/></svg></div>
<div class="tvl" style="left:253px;top:388px"></div>
<div class="thl" style="left:253px;top:408px;width:237px"></div>
<div class="tt" style="left:258px;top:388px"><span class="lt">1AA1</span>进线柜</div>
<div class="tt" style="left:474px;top:388px">正</div>
<div class="tvl2" style="top:388px"></div>
<div class="tri1" style="top:416px"></div>
<div class="cb" style="left:238px;top:413px"><svg width="13" height="13"><path d="M2.2 6.8 L5.8 10.2 L11 3.6" stroke="#3a3a3a" stroke-width="2.1" fill="none"/></svg></div>
<div class="tvl" style="left:253px;top:409px"></div>
<div class="thl" style="left:253px;top:429px;width:237px"></div>
<div class="tt" style="left:258px;top:409px"><span class="lt">2AA1</span>进线柜</div>
<div class="tt" style="left:474px;top:409px">正</div>
<div class="tvl2" style="top:409px"></div>
<div class="tri1" style="top:437px"></div>
<div class="cb" style="left:238px;top:434px"><svg width="13" height="13"><path d="M2.2 6.8 L5.8 10.2 L11 3.6" stroke="#3a3a3a" stroke-width="2.1" fill="none"/></svg></div>
<div class="tvl" style="left:253px;top:430px"></div>
<div class="thl" style="left:253px;top:450px;width:237px"></div>
<div class="tt" style="left:258px;top:430px"><span class="lt">3AA1</span>进线柜</div>
<div class="tt" style="left:474px;top:430px">正</div>
<div class="tvl2" style="top:430px"></div>
<div class="tri1" style="top:458px"></div>
<div class="cb" style="left:238px;top:455px"><svg width="13" height="13"><path d="M2.2 6.8 L5.8 10.2 L11 3.6" stroke="#3a3a3a" stroke-width="2.1" fill="none"/></svg></div>
<div class="tvl" style="left:253px;top:451px"></div>
<div class="thl" style="left:253px;top:471px;width:237px"></div>
<div class="tt" style="left:258px;top:451px"><span class="lt">4AA1</span>进线柜</div>
<div class="tt" style="left:474px;top:451px">正</div>
<div class="tvl2" style="top:451px"></div>
<div class="tri1" style="top:479px"></div>
<div class="cb" style="left:238px;top:476px"><svg width="13" height="13"><path d="M2.2 6.8 L5.8 10.2 L11 3.6" stroke="#3a3a3a" stroke-width="2.1" fill="none"/></svg></div>
<div class="tvl" style="left:253px;top:472px"></div>
<div class="thl" style="left:253px;top:492px;width:237px"></div>
<div class="tt" style="left:258px;top:472px"><span class="lt">5AA1</span>进线柜</div>
<div class="tt" style="left:474px;top:472px">正</div>
<div class="tvl2" style="top:472px"></div>
<div class="tri1" style="top:500px"></div>
<div class="cb" style="left:238px;top:497px"><svg width="13" height="13"><path d="M2.2 6.8 L5.8 10.2 L11 3.6" stroke="#3a3a3a" stroke-width="2.1" fill="none"/></svg></div>
<div class="tvl" style="left:253px;top:493px"></div>
<div class="thl" style="left:253px;top:513px;width:237px"></div>
<div class="tt" style="left:258px;top:493px"><span class="lt">6AA1</span>进线柜</div>
<div class="tt" style="left:474px;top:493px">正</div>
<div class="tvl2" style="top:493px"></div>
<div class="tri1" style="top:521px"></div>
<div class="cb" style="left:238px;top:518px"><svg width="13" height="13"><path d="M2.2 6.8 L5.8 10.2 L11 3.6" stroke="#3a3a3a" stroke-width="2.1" fill="none"/></svg></div>
<div class="tsel" style="top:514px"></div><div class="tsel2" style="top:514px"></div>
<div class="tvl" style="left:253px;top:514px"></div>
<div class="thl" style="left:253px;top:534px;width:237px"></div>
<div class="tt" style="left:258px;top:514px"><span class="lt">1GAA1</span>柴油发电机柜</div>
<div class="tt" style="left:474px;top:514px">正</div>
<div class="tvl2" style="top:514px"></div>
<div class="tri0" style="top:543px"></div>
<div class="cb" style="left:220px;top:539px"><svg width="13" height="13"><path d="M2.2 6.8 L5.8 10.2 L11 3.6" stroke="#3a3a3a" stroke-width="2.1" fill="none"/></svg></div>
<div class="tvl" style="left:235px;top:535px"></div>
<div class="thl" style="left:235px;top:555px;width:255px"></div>
<div class="thl" style="left:235px;top:534px;width:255px"></div>
<div class="tt" style="left:240px;top:535px"><span class="lt">2#</span>变配电室</div>
<div class="tvl2" style="top:535px"></div>
<div class="tri1" style="top:563px"></div>
<div class="cb" style="left:238px;top:560px"><svg width="13" height="13"><path d="M2.2 6.8 L5.8 10.2 L11 3.6" stroke="#3a3a3a" stroke-width="2.1" fill="none"/></svg></div>
<div class="tvl" style="left:253px;top:556px"></div>
<div class="thl" style="left:253px;top:576px;width:237px"></div>
<div class="tt" style="left:258px;top:556px"><span class="lt">7AA1/</span>总进线</div>
<div class="tt" style="left:474px;top:556px">正</div>
<div class="tvl2" style="top:556px"></div>
<div class="tri1" style="top:584px"></div>
<div class="cb" style="left:238px;top:581px"><svg width="13" height="13"><path d="M2.2 6.8 L5.8 10.2 L11 3.6" stroke="#3a3a3a" stroke-width="2.1" fill="none"/></svg></div>
<div class="tvl" style="left:253px;top:577px"></div>
<div class="thl" style="left:253px;top:597px;width:237px"></div>
<div class="tt" style="left:258px;top:577px"><span class="lt">8AA1/</span>总进线</div>
<div class="tt" style="left:474px;top:577px">正</div>
<div class="tvl2" style="top:577px"></div>
<div class="tri1" style="top:605px"></div>
<div class="cb" style="left:238px;top:602px"><svg width="13" height="13"><path d="M2.2 6.8 L5.8 10.2 L11 3.6" stroke="#3a3a3a" stroke-width="2.1" fill="none"/></svg></div>
<div class="tvl" style="left:253px;top:598px"></div>
<div class="thl" style="left:253px;top:618px;width:237px"></div>
<div class="tt" style="left:258px;top:598px"><span class="lt">9AA1/</span>总进线</div>
<div class="tt" style="left:474px;top:598px">正</div>
<div class="tvl2" style="top:598px"></div>
<div class="tri1" style="top:626px"></div>
<div class="cb" style="left:238px;top:623px"><svg width="13" height="13"><path d="M2.2 6.8 L5.8 10.2 L11 3.6" stroke="#3a3a3a" stroke-width="2.1" fill="none"/></svg></div>
<div class="tvl" style="left:253px;top:619px"></div>
<div class="thl" style="left:253px;top:639px;width:237px"></div>
<div class="tt" style="left:258px;top:619px"><span class="lt">10AA1/</span>总进线</div>
<div class="tt" style="left:474px;top:619px">正</div>
<div class="tvl2" style="top:619px"></div>
<div class="tri1" style="top:647px"></div>
<div class="cb" style="left:238px;top:644px"><svg width="13" height="13"><path d="M2.2 6.8 L5.8 10.2 L11 3.6" stroke="#3a3a3a" stroke-width="2.1" fill="none"/></svg></div>
<div class="tvl" style="left:253px;top:640px"></div>
<div class="thl" style="left:253px;top:660px;width:237px"></div>
<div class="tt" style="left:258px;top:640px"><span class="lt">2GAA1/</span>柴油发电机柜</div>
<div class="tt" style="left:474px;top:640px">正</div>
<div class="tvl2" style="top:640px"></div>
</div>

<!-- bottom buttons -->
<svg class="abs" style="left:1000px;top:1024px" width="40" height="36"><path d="M30.3 20.8 A12.8 12.8 0 1 1 24.4 5.7" stroke="#666" stroke-width="6.2" fill="none"/><path d="M34 1 L34 16 L19 13.5 Z" fill="#666"/></svg>
<div class="bbtn" style="left:994px;top:1059px">加载数据</div>
<svg class="abs" style="left:1080px;top:1024px" width="36" height="36"><path d="M3.5 1 L18 1 L25.6 8.6 L25.6 31.5 Q25.6 33 24 33 L3.5 33 Q2 33 2 31.5 L2 2.5 Q2 1 3.5 1 Z" fill="#666"/><path d="M16 17 L22.3 17 L22.3 10.8 L31.9 19.9 L22.3 29 L22.3 22.9 L16 22.9 Z" fill="#f0f0f0" stroke="#f0f0f0" stroke-width="5.5" stroke-linejoin="round"/><path d="M16 17 L22.3 17 L22.3 10.8 L31.9 19.9 L22.3 29 L22.3 22.9 L16 22.9 Z" fill="#666"/></svg>
<div class="bbtn" style="left:1072px;top:1059px">导出数据</div>

<!-- side tab -->
<svg class="abs" style="left:1642px;top:935px" width="30" height="58"><path d="M29 1 L12 1 Q3 1 3 8 L3 37 Q3 42 9 45 L29 57" fill="#fff" stroke="#d8dde3" stroke-width="1"/><path d="M12 14 L16 18 L12 22" stroke="#59687a" stroke-width="1.6" fill="none"/></svg>
<!-- teamviewer -->
<div class="tv">
 <div class="tvh"></div>
 <svg class="abs" style="left:8px;top:8px" width="40" height="40"><defs><linearGradient id="tvg" x1="1" y1="0" x2="0" y2="1"><stop offset="0" stop-color="#00b2f2"/><stop offset="1" stop-color="#0a8ae6"/></linearGradient></defs><rect x="0" y="0" width="40" height="40" rx="2" fill="url(#tvg)"/><circle cx="19.9" cy="20" r="16.8" fill="#1a72dc"/><circle cx="19.9" cy="20" r="16" fill="#fff"/><path d="M5.3 20 L15.8 14.2 L14.3 18 L25.5 18 L24 14.2 L34.7 20 L24 25.8 L25.5 22 L14.3 22 L15.8 25.8 Z" fill="#1a7ee8"/></svg>
 <div class="abs" style="left:62px;top:12px;font-size:22px;line-height:28px;color:#fff;white-space:nowrap;letter-spacing:0.4px"><b>Team</b>Viewer</div>
 <div class="abs" style="left:58px;top:34px;font-size:13px;line-height:15px;color:#fff;white-space:nowrap;letter-spacing:-0.5px">Trial license (evaluation use<br>only)</div>
 <svg class="abs" style="left:220px;top:24px" width="14" height="14"><path d="M2 2 L12 12 M12 2 L2 12" stroke="#fff" stroke-width="3"/></svg>
 <svg class="abs" style="left:0;top:66px" width="249" height="30">
  <g fill="#fff">
   <rect x="12.8" y="9" width="11.5" height="9.8" rx="1"/><path d="M24 12.5 L29.2 9.5 L29.2 18.3 L24 15.3 Z"/>
  </g>
  <path d="M48.3 15 L48.3 13.5 A6.7 6.7 0 0 1 61.7 13.5 L61.7 15" stroke="#fff" stroke-width="1.8" fill="none"/>
  <rect x="46.7" y="12.5" width="3.6" height="6.5" rx="1.8" fill="#fff"/><rect x="59.7" y="12.5" width="3.6" height="6.5" rx="1.8" fill="#fff"/>
  <path d="M61.5 18.5 Q61 21.5 55 21.5" stroke="#fff" stroke-width="1.4" fill="none"/><circle cx="54" cy="21.5" r="1.7" fill="#fff"/>
  <path d="M83 5.8 L90 5.8 Q92 5.8 92 7.8 L92 11.8 Q92 13.8 90 13.8 L85.5 13.8 L82.5 16.8 L82.5 13.8 Q80.8 13.5 80.8 11.8 L80.8 7.8 Q80.8 5.8 83 5.8 Z" fill="#fff"/>
  <path d="M85.5 15.2 L91 15.2 Q93.5 15.2 93.5 12.5 L93.5 12 L95 12 Q97.2 12 97.2 14 L97.2 17.5 Q97.2 19.5 95.5 19.5 L95.5 22 L92.5 19.5 L86.5 19.5 Q84.5 19.5 84.5 17.5 Z" fill="#fff"/>
  <rect x="116" y="5.8" width="10" height="12.7" fill="#fff"/><path d="M117.5 8 L117.5 9 M117.5 11 L117.5 12 M117.5 14 L117.5 15" stroke="#0066cc" stroke-width="1"/>
  <rect x="119.3" y="8.8" width="11.2" height="13" fill="#fff" stroke="#0066cc" stroke-width="1.2"/>
  <path d="M121.5 12.5 L128.5 12.5 M121.5 15.5 L128.5 15.5 M121.5 18.5 L125.5 18.5" stroke="#0066cc" stroke-width="1.3"/>
  <path d="M163.5 7 L157.5 13" stroke="#fff" stroke-width="2.6" stroke-linecap="round"/><circle cx="163.5" cy="6.8" r="1.8" fill="#fff"/><circle cx="163.5" cy="6.8" r="0.7" fill="#0066cc"/>
  <path d="M153.5 12.5 L158 17 L156.5 18.5 L152 14 Z" fill="#fff"/>
  <path d="M151.8 14.2 L156.3 18.7 L151.5 22 L149.3 19.8 Z" fill="#e6eefa"/>
  <path d="M190 9 L185.5 13.9 L190 18.8 M195.5 9 L191 13.9 L195.5 18.8" stroke="#fff" stroke-width="1.7" fill="none"/>
 </svg>
 <div class="abs" style="left:6px;top:112px;border-left:5px solid transparent;border-right:5px solid transparent;border-top:7px solid #6c7f94"></div>
 <div class="abs" style="left:20px;top:109px;font-size:15px;line-height:18px;color:#222">会话名单</div>
 <svg class="abs" style="left:226px;top:110px" width="22" height="14"><path d="M4.94 3.56 L4.93 1.71 L7.07 1.71 L7.06 3.56 L7.68 3.82 L8.98 2.50 L10.50 4.02 L9.18 5.32 L9.44 5.94 L11.29 5.93 L11.29 8.07 L9.44 8.06 L9.18 8.68 L10.50 9.98 L8.98 11.50 L7.68 10.18 L7.06 10.44 L7.07 12.29 L4.93 12.29 L4.94 10.44 L4.32 10.18 L3.02 11.50 L1.50 9.98 L2.82 8.68 L2.56 8.06 L0.71 8.07 L0.71 5.93 L2.56 5.94 L2.82 5.32 L1.50 4.02 L3.02 2.50 L4.32 3.82 Z" fill="#6c7f94"/><circle cx="6" cy="7" r="3.9" fill="#6c7f94"/><circle cx="6" cy="7" r="1.6" fill="#fff"/><path d="M12.5 6 L16.8 6 L14.65 8.8 Z" fill="#6c7f94"/></svg>
 <div class="abs" style="left:7px;top:144px;width:18px;height:18px;border:1px solid #8a98a8;background:#fff;overflow:hidden"><svg width="16" height="16"><circle cx="8" cy="6" r="3.5" fill="#97a6b6"/><path d="M1 16 Q2 10.5 8 10.5 Q14 10.5 15 16 Z" fill="#97a6b6"/></svg></div>
 <div class="abs" style="left:30px;top:146px;font-size:12px;line-height:14px;color:#222;white-space:nowrap;letter-spacing:0.15px">6UO9HV9P502U8A8 (1 481 293</div>
 <div class="abs" style="left:212px;top:149px;border-left:5px solid transparent;border-right:5px solid transparent;border-top:7px solid #4a4a4a"></div>
 <svg class="abs" style="left:225px;top:145px" width="16" height="16"><path d="M2 2 L14 7 L9 8.5 L13.2 12.8 L11.2 14.5 L7.3 10.2 L5 14 Z" fill="#4aa5ff"/></svg>
 <div class="abs" style="left:0;top:103px;width:1px;height:83px;background:#d0d6de"></div>
 <div class="abs" style="left:248px;top:103px;width:1px;height:83px;background:#d0d6de"></div>
 <div class="tvf"></div>
 <div class="abs" style="left:116px;top:191px;font-size:13px;line-height:16px;color:#fff;text-decoration:underline;white-space:nowrap">www.teamviewer.com</div>
</div>

</body></html>
